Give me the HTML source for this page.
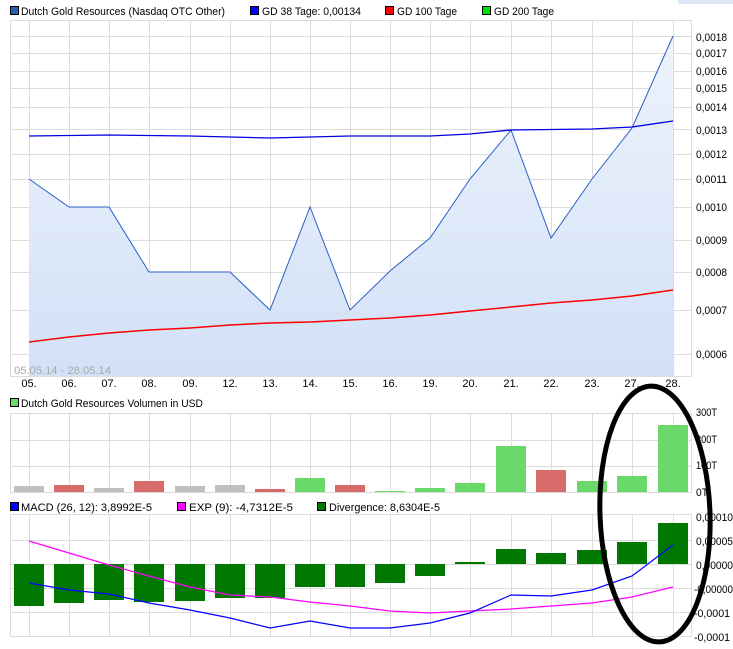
<!DOCTYPE html>
<html><head><meta charset="utf-8"><style>
html,body{margin:0;padding:0;background:#fff;width:733px;height:649px;overflow:hidden}
svg text{font-family:"Liberation Sans",sans-serif;font-size:11px;fill:#000}
</style></head><body>
<svg width="733" height="649" viewBox="0 0 733 649" xmlns="http://www.w3.org/2000/svg">
<defs><linearGradient id="g" x1="0" y1="0" x2="0" y2="1"><stop offset="0" stop-color="#eef3fc"/><stop offset="1" stop-color="#d2e1f7"/></linearGradient></defs>
<rect x="678" y="0" width="55" height="4" fill="#dde7f5"/>
<rect x="10.5" y="6.5" width="8" height="8" fill="#2a5fb0" stroke="#000"/>
<text x="21" y="15" textLength="204" lengthAdjust="spacingAndGlyphs">Dutch Gold Resources (Nasdaq OTC Other)</text>
<rect x="250.5" y="6.5" width="8" height="8" fill="#0000ff" stroke="#000"/>
<text x="262" y="15" textLength="99" lengthAdjust="spacingAndGlyphs">GD 38 Tage: 0,00134</text>
<rect x="385.5" y="6.5" width="8" height="8" fill="#ff0000" stroke="#000"/>
<text x="397" y="15" textLength="60" lengthAdjust="spacingAndGlyphs">GD 100 Tage</text>
<rect x="482.5" y="6.5" width="8" height="8" fill="#00e000" stroke="#000"/>
<text x="494" y="15" textLength="60" lengthAdjust="spacingAndGlyphs">GD 200 Tage</text>
<g stroke="#dcdcdc" stroke-width="1">
<path d="M29.5 20V376M69.5 20V376M109.5 20V376M149.5 20V376M190.5 20V376M230.5 20V376M270.5 20V376M310.5 20V376M350.5 20V376M390.5 20V376M430.5 20V376M470.5 20V376M511.5 20V376M551.5 20V376M592.5 20V376M632.5 20V376M673.5 20V376"/>
<path d="M10 36.5H691M10 53.5H691M10 71.5H691M10 88.5H691M10 107.5H691M10 129.5H691M10 154.5H691M10 179.5H691M10 207.5H691M10 240.5H691M10 272.5H691M10 310.5H691M10 354.5H691"/>
<rect x="10.5" y="20.5" width="681" height="356" fill="none"/>
</g>
<path d="M29 179L69 207L109 207L149 272L190 272L230 272L270 310L310 207L350 310L390 271L430 238L470 179L511 130L551 238L592 179L632 128L673 36L673 376L29 376Z" fill="url(#g)"/>
<path d="M29 179L69 207L109 207L149 272L190 272L230 272L270 310L310 207L350 310L390 271L430 238L470 179L511 130L551 238L592 179L632 128L673 36" fill="none" stroke="#2a5fc8" stroke-width="1"/>
<path d="M29 136L109 135L190 136L270 138L350 136L430 136L470 134L511 130L592 129L632 127L673 121" fill="none" stroke="#0000e0" stroke-width="1.3"/>
<path d="M29 342L69 337L109 333L149 330L190 328L230 325L270 323L310 322L350 320L390 318L430 315L470 311L511 307L551 303L592 300L632 296L673 290" fill="none" stroke="#ff0000" stroke-width="1.5"/>
<text x="14" y="374" style="fill:#a8a8a8" textLength="97" lengthAdjust="spacingAndGlyphs">05.05.14 - 28.05.14</text>
<g>
<text x="696" y="41" textLength="31" lengthAdjust="spacingAndGlyphs">0,0018</text><text x="696" y="57" textLength="31" lengthAdjust="spacingAndGlyphs">0,0017</text><text x="696" y="75" textLength="31" lengthAdjust="spacingAndGlyphs">0,0016</text><text x="696" y="92" textLength="31" lengthAdjust="spacingAndGlyphs">0,0015</text><text x="696" y="111" textLength="31" lengthAdjust="spacingAndGlyphs">0,0014</text><text x="696" y="134" textLength="31" lengthAdjust="spacingAndGlyphs">0,0013</text><text x="696" y="158" textLength="31" lengthAdjust="spacingAndGlyphs">0,0012</text><text x="696" y="183" textLength="31" lengthAdjust="spacingAndGlyphs">0,0011</text><text x="696" y="211" textLength="31" lengthAdjust="spacingAndGlyphs">0,0010</text><text x="696" y="244" textLength="31" lengthAdjust="spacingAndGlyphs">0,0009</text><text x="696" y="276" textLength="31" lengthAdjust="spacingAndGlyphs">0,0008</text><text x="696" y="314" textLength="31" lengthAdjust="spacingAndGlyphs">0,0007</text><text x="696" y="358" textLength="31" lengthAdjust="spacingAndGlyphs">0,0006</text>
</g>
<g text-anchor="middle">
<text x="29" y="387">05.</text><text x="69" y="387">06.</text><text x="109" y="387">07.</text><text x="149" y="387">08.</text><text x="190" y="387">09.</text><text x="230" y="387">12.</text><text x="270" y="387">13.</text><text x="310" y="387">14.</text><text x="350" y="387">15.</text><text x="390" y="387">16.</text><text x="430" y="387">19.</text><text x="470" y="387">20.</text><text x="511" y="387">21.</text><text x="551" y="387">22.</text><text x="592" y="387">23.</text><text x="632" y="387">27.</text><text x="673" y="387">28.</text>
</g>
<rect x="10.5" y="398.5" width="8" height="8" fill="#6ad96a" stroke="#000"/>
<text x="21" y="407" textLength="182" lengthAdjust="spacingAndGlyphs">Dutch Gold Resources Volumen in USD</text>
<g stroke="#dcdcdc">
<path d="M29.5 413V492M69.5 413V492M109.5 413V492M149.5 413V492M190.5 413V492M230.5 413V492M270.5 413V492M310.5 413V492M350.5 413V492M390.5 413V492M430.5 413V492M470.5 413V492M511.5 413V492M551.5 413V492M592.5 413V492M632.5 413V492M673.5 413V492"/>
<path d="M10 440.5H691M10 466.5H691"/>
<rect x="10.5" y="413.5" width="681" height="79" fill="none"/>
</g>
<g fill="#c0c0c0"><rect x="14" y="486" width="30" height="6"/><rect x="94" y="488" width="30" height="4"/><rect x="175" y="486" width="30" height="6"/><rect x="215" y="485" width="30" height="7"/></g>
<g fill="#d96a6a"><rect x="54" y="485" width="30" height="7"/><rect x="134" y="481" width="30" height="11"/><rect x="255" y="489" width="30" height="3"/><rect x="335" y="485" width="30" height="7"/><rect x="536" y="470" width="30" height="22"/></g>
<g fill="#6ad96a"><rect x="295" y="478" width="30" height="14"/><rect x="375" y="491" width="30" height="1"/><rect x="415" y="488" width="30" height="4"/><rect x="455" y="483" width="30" height="9"/><rect x="496" y="446" width="30" height="46"/><rect x="577" y="481" width="30" height="11"/><rect x="617" y="476" width="30" height="16"/><rect x="658" y="425" width="30" height="67"/></g>
<text x="696" y="416" textLength="21" lengthAdjust="spacingAndGlyphs">300T</text><text x="696" y="443" textLength="21" lengthAdjust="spacingAndGlyphs">200T</text><text x="696" y="469" textLength="21" lengthAdjust="spacingAndGlyphs">100T</text><text x="696" y="496" textLength="12" lengthAdjust="spacingAndGlyphs">0T</text>
<rect x="10.5" y="502.5" width="8" height="8" fill="#0000ff" stroke="#000"/>
<text x="21" y="511" textLength="131" lengthAdjust="spacingAndGlyphs">MACD (26, 12): 3,8992E-5</text>
<rect x="177.5" y="502.5" width="8" height="8" fill="#ff00ff" stroke="#000"/>
<text x="189" y="511" textLength="104" lengthAdjust="spacingAndGlyphs">EXP (9): -4,7312E-5</text>
<rect x="317.5" y="502.5" width="8" height="8" fill="#007800" stroke="#000"/>
<text x="329" y="511" textLength="111" lengthAdjust="spacingAndGlyphs">Divergence: 8,6304E-5</text>
<g stroke="#dcdcdc">
<path d="M29.5 514V636M69.5 514V636M109.5 514V636M149.5 514V636M190.5 514V636M230.5 514V636M270.5 514V636M310.5 514V636M350.5 514V636M390.5 514V636M430.5 514V636M470.5 514V636M511.5 514V636M551.5 514V636M592.5 514V636M632.5 514V636M673.5 514V636"/>
<path d="M10 540.5H691M10 564.5H691M10 588.5H691M10 612.5H691"/>
<rect x="10.5" y="514.5" width="681" height="122" fill="none"/>
</g>
<g fill="#007800">
<rect x="14" y="564" width="30" height="42"/><rect x="54" y="564" width="30" height="39"/><rect x="94" y="564" width="30" height="36"/><rect x="134" y="564" width="30" height="38"/><rect x="175" y="564" width="30" height="37"/><rect x="215" y="564" width="30" height="34"/><rect x="255" y="564" width="30" height="34"/><rect x="295" y="564" width="30" height="23"/><rect x="335" y="564" width="30" height="23"/><rect x="375" y="564" width="30" height="19"/><rect x="415" y="564" width="30" height="12"/><rect x="455" y="562" width="30" height="2"/><rect x="496" y="549" width="30" height="15"/><rect x="536" y="553" width="30" height="11"/><rect x="577" y="550" width="30" height="14"/><rect x="617" y="542" width="30" height="22"/><rect x="658" y="523" width="30" height="41"/>
</g>
<path d="M29 541L69 553L109 565L149 576L190 587L230 595L270 597L310 602L350 606L390 611L430 613L470 611L511 609L551 606L592 603L632 597L673 587" fill="none" stroke="#ff00ff" stroke-width="1.2"/>
<path d="M29 583L69 590L109 594L149 603L190 610L230 618L270 628L310 621L350 628L390 628L430 623L470 613L511 595L551 596L592 590L632 576L673 545" fill="none" stroke="#0000ff" stroke-width="1.2"/>
<text x="696" y="521" textLength="37" lengthAdjust="spacingAndGlyphs">0,00010</text><text x="696" y="545" textLength="37" lengthAdjust="spacingAndGlyphs">0,00005</text><text x="696" y="569" textLength="37" lengthAdjust="spacingAndGlyphs">0,00000</text><text x="694" y="593" textLength="39" lengthAdjust="spacingAndGlyphs">-0,00000</text><text x="694" y="617" textLength="36" lengthAdjust="spacingAndGlyphs">-0,0001</text><text x="694" y="641" textLength="36" lengthAdjust="spacingAndGlyphs">-0,0001</text>
<ellipse cx="655" cy="514" rx="55" ry="128" fill="none" stroke="#000" stroke-width="5" transform="rotate(-2 655 514)"/>
</svg>
</body></html>
